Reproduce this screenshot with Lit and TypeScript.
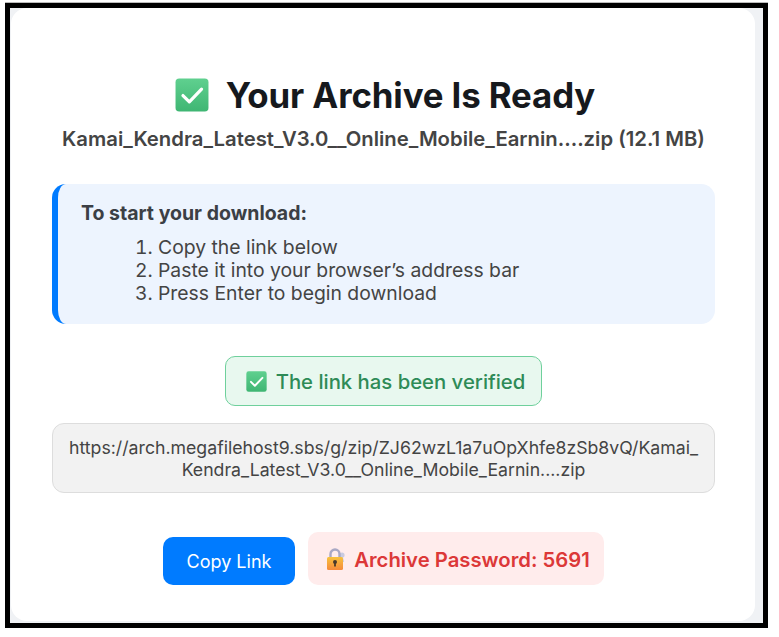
import { LitElement, html, css, svg } from "lit";
import { customElement } from "lit/decorators.js";

const check = (size: number) => html`<svg class="chk" width="${size}" height="${size}" viewBox="0 0 32 32" aria-hidden="true">
  <defs><linearGradient id="g${size}" x1="0" y1="0" x2="0" y2="1"><stop offset="0" stop-color="#5fd08f"/><stop offset="1" stop-color="#3fb673"/></linearGradient></defs>
  <rect x="0.5" y="0.5" width="31" height="31" rx="3.5" fill="url(#g${size})"/>
  <path d="M7.5 16.5 L13.5 22.5 L25 10.5" fill="none" stroke="#fff" stroke-width="3" stroke-linecap="round" stroke-linejoin="round"/>
</svg>`;

const lock = svg`<svg width="20" height="24" viewBox="0 0 20 24" aria-hidden="true">
  <defs><linearGradient id="lk" x1="0" y1="0" x2="0" y2="1"><stop offset="0" stop-color="#f7c23c"/><stop offset="1" stop-color="#f58a3c"/></linearGradient></defs>
  <circle cx="16" cy="8" r="2.6" fill="#c9cbe0"/>
  <path d="M15 8 L17 15" stroke="#c9cbe0" stroke-width="2.4"/>
  <path d="M4.5 11 V7 a4.5 4.5 0 0 1 9 0 V11" fill="none" stroke="#a9a8c4" stroke-width="2.4"/>
  <rect x="1" y="10" width="16" height="13" rx="1.5" fill="url(#lk)"/>
  <circle cx="9" cy="15" r="2" fill="#4a3a2a"/>
  <rect x="8.1" y="15" width="1.8" height="4.5" fill="#4a3a2a"/>
</svg>`;

@customElement("app-root")
export class AppRoot extends LitElement {
  static styles = css`
    :host { display: block; width: 779px; height: 637px; background: #fff; font-family: Inter, "Liberation Sans", sans-serif; padding: 3px 11px 9px 5px; box-sizing: border-box; }
    .frame { height: 100%; box-sizing: border-box; border: 5px solid #000; box-shadow: 0 -1px 0 #bbb; background: #f0f2f5; padding: 0 8px 2px 1px; }
    .card { height: 100%; box-sizing: border-box; background: #fff; border-radius: 16px; padding: 69px 40px 0 41px; display: flex; flex-direction: column; align-items: stretch; }
    h1 { margin: 0; padding-left: 3px; display: flex; justify-content: center; align-items: center; gap: 17px; font-size: 34.8px; line-height: 36px; font-weight: 700; color: #16191d; letter-spacing: -0.1px; }
    .file { margin: 13px 0 0; text-align: center; font-size: 20.3px; line-height: 26px; font-weight: 600; color: #444; white-space: nowrap; }
    .info { margin-top: 32px; height: 140px; box-sizing: border-box; border-left: 6px solid #007bff; border-radius: 14px; background: #edf4fe; padding: 18px 23px; color: #444; font-size: 19.35px; line-height: 23px; }
    .info strong { display: block; font-weight: 700; font-size: 19.5px; margin-bottom: 11px; color: #3b3f45; }
    .info ol { margin: 0; padding-left: 77px; }
    .verified { align-self: center; margin-top: 32px; height: 50px; box-sizing: border-box; width: 317px; padding-left: 4px; display: flex; align-items: center; justify-content: center; gap: 9px; background: #e8f8ef; border: 1px solid #6fd09c; border-radius: 10px; color: #2e8b57; font-size: 20.3px; font-weight: 500; }
    .url { margin-top: 17px; height: 70px; box-sizing: border-box; background: #f2f2f2; border: 1px solid #ddd; border-radius: 12px; padding: 13px 13px; text-align: center; font-size: 17.7px; line-height: 22px; color: #444; word-break: break-all; }
    .actions { display: flex; justify-content: center; align-items: flex-end; gap: 13px; margin-top: 39px; }
    button { all: unset; box-sizing: border-box; width: 132px; height: 48px; line-height: 45px; background: #007bff; color: #fff; border-radius: 10px; font-size: 18px; text-align: center; }
    .pw { box-sizing: border-box; width: 296px; height: 53px; padding: 1px 0 0 4px; display: flex; align-items: center; justify-content: center; gap: 8px; background: #ffecec; border-radius: 10px; color: #dc3838; font-size: 20.3px; font-weight: 600; }
  `;

  render() {
    return html`<div class="frame"><div class="card">
      <h1>${check(34)}<span>Your Archive Is Ready</span></h1>
      <p class="file">Kamai_Kendra_Latest_V3.0__Online_Mobile_Earnin....zip (12.1 MB)</p>
      <div class="info">
        <strong>To start your download:</strong>
        <ol>
          <li>Copy the link below</li>
          <li>Paste it into your browser’s address bar</li>
          <li>Press Enter to begin download</li>
        </ol>
      </div>
      <div class="verified">${check(21)}<span>The link has been verified</span></div>
      <div class="url">https://arch.megafilehost9.sbs/g/zip/ZJ62wzL1a7uOpXhfe8zSb8vQ/Kamai_Kendra_Latest_V3.0__Online_Mobile_Earnin....zip</div>
      <div class="actions">
        <button>Copy Link</button>
        <div class="pw">${lock}<span>Archive Password: 5691</span></div>
      </div>
    </div></div>`;
  }
}
